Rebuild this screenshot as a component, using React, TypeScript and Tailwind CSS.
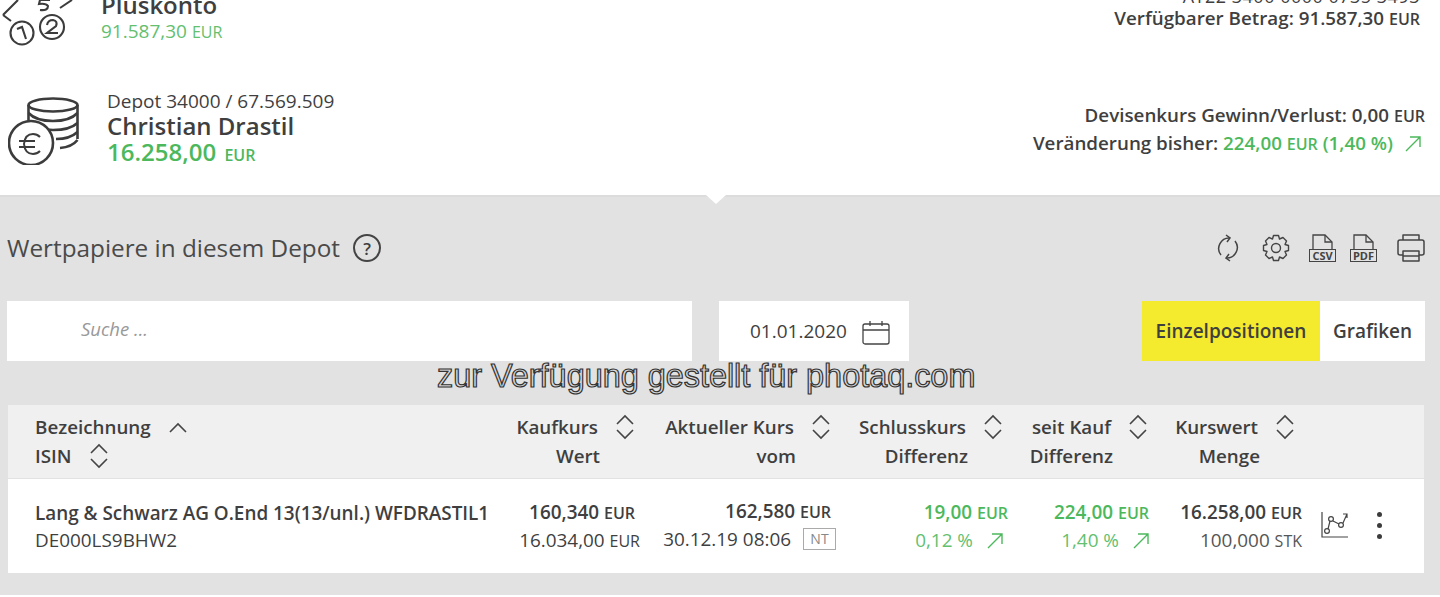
const SortIcon = () => (
  <svg width="22" height="26" viewBox="0 0 22 26" fill="none" stroke="#444" strokeWidth="1.6" className="shrink-0">
    <path d="M3 10 L11 2 L19 10" />
    <path d="M3 16 L11 24 L19 16" />
  </svg>
);

const Up = () => (
  <svg width="16" height="16" viewBox="0 0 16 16" fill="none" stroke="#4cb85c" strokeWidth="1.4" className="shrink-0">
    <path d="M1 15 L15 1 M5 1 H15 V11" />
  </svg>
);

const CoinsIcon = () => (
  <svg width="72" height="68" viewBox="0 0 72 68" fill="none" stroke="#3c3c3c" strokeWidth="2.6">
    <ellipse cx="45" cy="8" rx="24.5" ry="6.5" />
    <path d="M20.5 8 V30 M69.5 8 V42" />
    <path d="M20.5 16 Q28 24 45 24 Q62 24 69.5 16" />
    <path d="M22 26 Q32 33 45 33 Q62 33 69.5 26" />
    <path d="M48 42 Q62 42 69.5 35" />
    <path d="M52 51 Q64 50 69.5 43" />
    <circle cx="23" cy="46" r="22" fill="#fff" />
    <path d="M32 40 Q29 37 25 37 Q17 37 16 47 Q17 57 25 57 Q29 57 32 54 M11 44 H27 M11 50 H27" strokeWidth="2" />
  </svg>
);

const ChangeIcon = () => (
  <svg width="72" height="46" viewBox="0 0 72 46" fill="none" stroke="#3c3c3c" strokeWidth="2.1">
    <path d="M1 15 L16 0 M1 15 L9 21" />
    <path d="M48 0 H38 L37 4 Q44 3 46 6 Q46 11 38 10" />
    <path d="M58 8 L70 0" />
    <circle cx="20" cy="33" r="11.5" />
    <path d="M15 29 L20 27 L24 39" />
    <circle cx="50" cy="27" r="12" />
    <path d="M45 25 Q46 20 51 20 Q56 21 54 26 L45 33 H56" />
  </svg>
);

const FileIcon = ({ label }: { label: string }) => (
  <div className="flex h-[28px] w-[27px] flex-col items-center">
    <svg width="21" height="15" viewBox="0 0 21 15" fill="none" stroke="#444" strokeWidth="1.3" className="shrink-0">
      <path d="M1 15 V1 H13 L20 8 V15" />
      <path d="M13 1 V8 H20" />
    </svg>
    <span className="flex h-[13px] w-[27px] shrink-0 items-center justify-center border border-[#444] text-[11px] leading-none font-bold text-[#444]">
      {label}
    </span>
  </div>
);

const GearIcon = () => (
  <svg width="28" height="28" viewBox="0 0 28 28" fill="none" stroke="#444" strokeWidth="1.4" strokeLinejoin="round">
    <circle cx="14" cy="14" r="4.5" />
    <path d="M11.5 1.5 H16.5 L17.5 5 L21 3.5 L24.5 7 L23 10.5 L26.5 11.5 V16.5 L23 17.5 L24.5 21 L21 24.5 L17.5 23 L16.5 26.5 H11.5 L10.5 23 L7 24.5 L3.5 21 L5 17.5 L1.5 16.5 V11.5 L5 10.5 L3.5 7 L7 3.5 L10.5 5 Z" />
  </svg>
);

const SyncIcon = () => (
  <svg width="24" height="28" viewBox="0 0 24 28" fill="none" stroke="#444" strokeWidth="1.5">
    <path d="M5 21 A10.5 10.5 0 0 1 14 4" />
    <path d="M10 1 L14 4 L11 8" />
    <path d="M19 7 A10.5 10.5 0 0 1 10 24" />
    <path d="M14 27 L10 24 L13 20" />
  </svg>
);

const PrinterIcon = () => (
  <svg width="28" height="28" viewBox="0 0 28 28" fill="none" stroke="#444" strokeWidth="1.5" strokeLinejoin="round">
    <path d="M6 6 V1 H22 V6" />
    <path d="M6 21 H3 Q1 21 1 19 V8 Q1 6 3 6 H25 Q27 6 27 8 V19 Q27 21 25 21 H22" />
    <path d="M6 17 H22 V27 H6 Z" />
    <path d="M6 22 H22" />
  </svg>
);

const CalendarIcon = () => (
  <svg width="28" height="24" viewBox="0 0 28 24" fill="none" stroke="#444" strokeWidth="1.3" className="mt-[2px]">
    <rect x="1" y="3" width="26" height="20" rx="2" />
    <path d="M1 9 H27 M8 0 V5 M20 0 V5" />
  </svg>
);

const ChartIcon = () => (
  <svg width="28" height="28" viewBox="0 0 28 28" fill="none" stroke="#444" strokeWidth="1.2">
    <path d="M1 1 V26 H27" />
    <circle cx="6" cy="20" r="2.4" />
    <circle cx="10" cy="8" r="2.4" />
    <circle cx="20" cy="14" r="2.4" />
    <path d="M7 18 L9 10 M12 10 L18 13 M22 12 L26 3 M22 3 H26 V7" />
  </svg>
);

const HeadCell = ({ top, bottom, pad }: { top: string; bottom: string; pad: string }) => (
  <div className={`flex flex-col items-end ${pad}`}>
    <div className="flex h-[30px] items-center gap-[16px] whitespace-nowrap">
      <span>{top}</span>
      <SortIcon />
    </div>
    <div className="mr-[36px] h-[28px] leading-[28px]">{bottom}</div>
  </div>
);

export default function App() {
  return (
    <div className="relative h-[597px] w-[1440px] overflow-hidden bg-white font-['Open_Sans',sans-serif] text-[#3f3f3f]">
      <header className="relative flex h-[195px] flex-col">
        <div className="-mt-[12px] flex h-[60px] shrink-0 justify-between pr-[20px]">
          <div className="flex">
            <div className="mt-[12px] ml-[2px] w-[99px]">
              <ChangeIcon />
            </div>
            <div className="mt-[2px]">
              <div className="text-[24px] leading-[29px] font-semibold">Pluskonto</div>
              <div className="text-[19px] leading-[24px] text-[#63c06f]">
                91.587,30 <span className="text-[16px]">EUR</span>
              </div>
            </div>
          </div>
          <div className="-mt-[3px] text-right text-[18.8px] leading-[22px] font-semibold">
            <div className="text-[18px] font-normal tracking-[0.5px]">AT22 3400 0000 0735 3493</div>
            <div>
              Verfügbarer Betrag: 91.587,30 <span className="text-[16px]">EUR</span>
            </div>
          </div>
        </div>
        <div className="mt-[42px] flex justify-between pr-[15px]">
          <div className="flex">
            <div className="mt-[7px] ml-[8px] w-[99px]">
              <CoinsIcon />
            </div>
            <div>
              <div className="text-[19px] leading-[23px]">Depot 34000 / 67.569.509</div>
              <div className="text-[24px] leading-[26px] font-semibold">Christian Drastil</div>
              <div className="text-[24px] leading-[26px] font-semibold text-[#4cb85c]">
                16.258,00 <span className="ml-[2px] text-[16px] font-semibold">EUR</span>
              </div>
            </div>
          </div>
          <div className="mt-[12px] text-right text-[18.8px] leading-[27px] font-semibold">
            <div>
              Devisenkurs Gewinn/Verlust: 0,00 <span className="text-[16px]">EUR</span>
            </div>
            <div className="flex h-[27px] items-center justify-end">
              <span>Veränderung bisher:&nbsp;</span>
              <span className="text-[#4cb85c]">
                224,00 <span className="text-[16px]">EUR</span> (1,40 %)
              </span>
              <span className="mr-[4px] ml-[12px]">
                <Up />
              </span>
            </div>
          </div>
        </div>
      </header>

      <main className="h-[400px] border-t-2 border-[#dcdcdc] bg-[#e2e2e2] px-[7px] pt-[31px]">
        <div className="flex h-[40px] items-center justify-between pr-[8px]">
          <div className="flex items-center gap-[13px]">
            <h2 className="text-[24.3px] leading-none font-normal text-[#4a4a4a]">Wertpapiere in diesem Depot</h2>
            <span className="flex h-[28px] w-[28px] items-center justify-center rounded-full border-2 border-[#444] text-[17px] leading-none font-semibold">
              ?
            </span>
          </div>
          <div className="flex items-center">
            <SyncIcon />
            <div className="ml-[22px]">
              <GearIcon />
            </div>
            <div className="ml-[19px]">
              <FileIcon label="CSV" />
            </div>
            <div className="ml-[14px]">
              <FileIcon label="PDF" />
            </div>
            <div className="ml-[20px]">
              <PrinterIcon />
            </div>
          </div>
        </div>

        <div className="mt-[33px] flex h-[60px] items-stretch pr-[8px]">
          <div className="flex h-[60px] w-[685px] items-center bg-white pb-[4px] pl-[74px] text-[18.5px] text-[#999] italic">
            Suche ...
          </div>
          <div className="ml-[27px] flex w-[190px] items-center gap-[15px] bg-white pt-[1px] pl-[31px] text-[19px]">
            <span>01.01.2020</span>
            <CalendarIcon />
          </div>
          <div className="ml-auto flex pt-0 text-[19px] font-semibold">
            <div className="flex w-[178px] items-center justify-center bg-[#f4ea2e] pt-[1px]">Einzelpositionen</div>
            <div className="flex w-[105px] items-center justify-center bg-white pt-[1px]">Grafiken</div>
          </div>
        </div>

        <div className="mt-[44px] ml-[1px] w-[1416px] text-[18.8px] font-semibold">
          <div className="grid h-[73px] grid-cols-[460px_145px_196px_172px_141px_153px_1fr] items-center bg-[#f0f0f0] pb-[1px] pl-[27px]">
            <div>
              <div className="flex h-[30px] items-center gap-[18px]">
                <span>Bezeichnung</span>
                <svg width="18" height="11" viewBox="0 0 18 11" fill="none" stroke="#444" strokeWidth="1.6">
                  <path d="M1 10 L9 2 L17 10" />
                </svg>
              </div>
              <div className="flex h-[28px] items-center gap-[16px]">
                <span>ISIN</span>
                <SortIcon />
              </div>
            </div>
            <HeadCell top="Kaufkurs" bottom="Wert" pad="pr-[4px]" />
            <HeadCell top="Aktueller Kurs" bottom="vom" pad="pr-[4px]" />
            <HeadCell top="Schlusskurs" bottom="Differenz" pad="pr-[4px]" />
            <HeadCell top="seit Kauf" bottom="Differenz" pad="pr-[0px]" />
            <HeadCell top="Kurswert" bottom="Menge" pad="pr-[6px]" />
            <div />
          </div>
          <div className="mt-[1px] grid h-[94px] grid-cols-[460px_145px_196px_172px_141px_153px_1fr] items-center bg-white pt-[1px] pl-[27px] text-[18.9px]">
            <div className="leading-[27px] whitespace-nowrap">
              <div>Lang &amp; Schwarz AG O.End 13(13/unl.) WFDRASTIL1</div>
              <div className="font-normal">DE000LS9BHW2</div>
            </div>
            <div className="text-right leading-[27px]">
              <div className="pr-[5px]">
                160,340 <span className="text-[16px]">EUR</span>
              </div>
              <div className="font-normal">
                16.034,00 <span className="text-[16px]">EUR</span>
              </div>
            </div>
            <div className="pb-[3px] text-right leading-[27px]">
              <div className="pr-[5px]">
                162,580 <span className="text-[16px]">EUR</span>
              </div>
              <div className="flex items-center justify-end gap-[12px] font-normal whitespace-nowrap">
                <span>30.12.19 08:06</span>
                <span className="h-[22px] w-[33px] border border-[#aaa] text-center text-[14px] leading-[20px] text-[#888]">
                  NT
                </span>
              </div>
            </div>
            <div className="text-right leading-[27px] text-[#4cb85c]">
              <div>
                19,00 <span className="text-[16px]">EUR</span>
              </div>
              <div className="flex items-center justify-end gap-[14px] pr-[5px] font-normal text-[#63c06f]">
                <span>0,12 %</span>
                <Up />
              </div>
            </div>
            <div className="text-right leading-[27px] text-[#4cb85c]">
              <div>
                224,00 <span className="text-[16px]">EUR</span>
              </div>
              <div className="flex items-center justify-end gap-[14px] font-normal text-[#63c06f]">
                <span>1,40 %</span>
                <Up />
              </div>
            </div>
            <div className="text-right leading-[27px]">
              <div>
                16.258,00 <span className="text-[16px]">EUR</span>
              </div>
              <div className="font-normal text-[#555]">
                100,000 <span className="text-[16px]">STK</span>
              </div>
            </div>
            <div className="flex items-center pb-[3px] pl-[19px]">
              <ChartIcon />
              <div className="ml-[28px] flex flex-col gap-[6px]">
                <span className="h-[5px] w-[5px] rounded-full bg-[#3c3c3c]" />
                <span className="h-[5px] w-[5px] rounded-full bg-[#3c3c3c]" />
                <span className="h-[5px] w-[5px] rounded-full bg-[#3c3c3c]" />
              </div>
            </div>
          </div>
        </div>
      </main>

      <div className="absolute top-[195px] left-[706px] h-0 w-0 border-x-[10px] border-t-[9px] border-x-transparent border-t-white" />

      <div className="absolute top-[357px] left-[437px] font-['Liberation_Sans',sans-serif] text-[32.4px] leading-[38px] whitespace-nowrap text-[#d8d8d8] [-webkit-text-stroke:1.2px_#333]">
        zur Verfügung gestellt für photaq.com
      </div>
    </div>
  );
}
